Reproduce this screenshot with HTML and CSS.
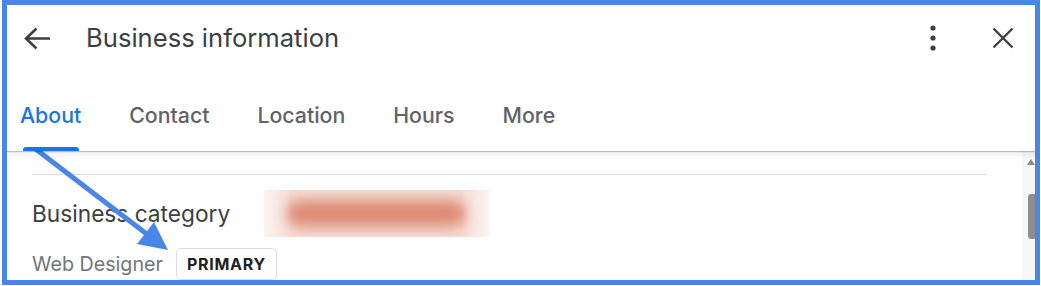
FILE: index.html
```html
<!DOCTYPE html>
<html lang="en">
<head>
<meta charset="utf-8">
<title>Business information</title>
<link rel="stylesheet" href="styles.css">
</head>
<body>
<div class="frame">
  <div class="topbar">
    <div class="header">
      <svg class="back" width="27" height="23" viewBox="0 0 27 23"><path d="M2 11.5H26M12.5 1.5L2 11.5L12.5 21.5" fill="none" stroke="#3c4043" stroke-width="2.6" stroke-linejoin="miter"/></svg>
      <div class="title">Business information</div>
      <div class="actions">
        <svg class="kebab" width="8" height="26" viewBox="0 0 8 26"><circle cx="4" cy="3" r="2.6" fill="#3c4043"/><circle cx="4" cy="13" r="2.6" fill="#3c4043"/><circle cx="4" cy="23" r="2.6" fill="#3c4043"/></svg>
        <svg class="close" width="22" height="22" viewBox="0 0 22 22"><path d="M1.5 1.5L20.5 20.5M20.5 1.5L1.5 20.5" stroke="#3c4043" stroke-width="2.4"/></svg>
      </div>
    </div>
    <div class="tabs">
      <div class="tab active">About</div>
      <div class="tab">Contact</div>
      <div class="tab">Location</div>
      <div class="tab">Hours</div>
      <div class="tab">More</div>
    </div>
  </div>
  <div class="body">
    <div class="content">
      <div class="divider"></div>
      <div class="row">
        <div class="label">Business category</div>
        <div class="redact"><div class="redact-inner"></div></div>
      </div>
      <div class="row2">
        <div class="sub">Web Designer</div>
        <div class="chip">PRIMARY</div>
      </div>
    </div>
    <div class="scrollbar">
      <div class="sb-arrow"></div>
      <div class="sb-thumb"></div>
    </div>
  </div>
</div>
<svg class="annot" width="1041" height="286" viewBox="0 0 1041 286">
  <line x1="33" y1="147" x2="148" y2="235" stroke="#4a86e8" stroke-width="5"/>
  <polygon points="168,250 137,244 154,222" fill="#4a86e8"/>
</svg>
</body>
</html>
```
FILE: styles.css
```css
html, body {
  margin: 0;
  padding: 0;
  background: #fff;
}
body {
  width: 1041px;
  height: 286px;
  position: relative;
  overflow: hidden;
  font-family: Inter, Roboto, Arial, sans-serif;
}
.frame {
  margin-left: 2px;
  width: 1038px;
  height: 285px;
  box-sizing: border-box;
  border: 5px solid #4a86e8;
  display: flex;
  flex-direction: column;
  overflow: hidden;
  background: #fff;
}
.topbar {
  position: relative;
  z-index: 2;
  background: #fff;
  box-shadow: 0 1px 1px rgba(0,0,0,0.22), 0 3px 8px rgba(0,0,0,0.08);
  flex: none;
}
.header {
  height: 66px;
  display: flex;
  align-items: center;
  padding-left: 17px;
}
.back {
  flex: none;
  display: block;
}
.title {
  margin-left: 35px;
  margin-bottom: 2px;
  font-size: 25.6px;
  color: #3c4043;
}
.actions {
  margin-left: auto;
  display: flex;
  align-items: center;
  padding-right: 21px;
}
.kebab {
  display: block;
  margin-right: 55px;
}
.close {
  display: block;
}
.tabs {
  height: 80px;
  display: flex;
  align-items: stretch;
  padding-left: 13px;
  gap: 48px;
}
.tab {
  font-size: 21.3px;
  font-weight: 500;
  color: #5f6368;
  display: flex;
  align-items: center;
  padding-top: 8px;
  position: relative;
}
.tab.active {
  color: #1a73e8;
}
.tab.active::after {
  content: "";
  position: absolute;
  left: 3px;
  right: 2px;
  bottom: 0;
  height: 4px;
  background: #1a73e8;
  border-radius: 3px 3px 0 0;
}
.body {
  flex: 1;
  display: flex;
  min-height: 0;
}
.content {
  flex: 1;
  padding: 23px 35px 0 25px;
}
.divider {
  height: 1px;
  background: #dadce0;
}
.row {
  margin-top: 14px;
  display: flex;
  align-items: center;
  height: 48px;
}
.label {
  font-size: 22.7px;
  color: #3c4043;
  width: 232px;
}
.redact {
  width: 225px;
  height: 47px;
  background: #f5ddd6;
  position: relative;
  overflow: hidden;
  -webkit-mask-image: linear-gradient(90deg, rgba(0,0,0,0.35), #000 12%, #000 88%, rgba(0,0,0,0.35));
  mask-image: linear-gradient(90deg, rgba(0,0,0,0.35), #000 12%, #000 88%, rgba(0,0,0,0.35));
}
.redact-inner {
  position: absolute;
  left: 22px;
  right: 22px;
  top: 10px;
  bottom: 10px;
  border-radius: 14px;
  background: #de8b74;
  filter: blur(7px);
}
.row2 {
  margin-top: 11px;
  display: flex;
  align-items: center;
}
.sub {
  font-size: 19.7px;
  color: #70757a;
}
.chip {
  margin-left: 13px;
  border: 1px solid #dadce0;
  border-radius: 5px;
  padding: 5px 10px 5px 10px;
  font-size: 16px;
  font-weight: 700;
  color: #202124;
  letter-spacing: 0.7px;
}
.scrollbar {
  width: 13px;
  flex: none;
  background: #f6f6f6;
  position: relative;
}
.sb-arrow {
  margin: 8px 0 0 5px;
  width: 0;
  height: 0;
  border-left: 4px solid transparent;
  border-right: 4px solid transparent;
  border-bottom: 6px solid #8a8a8a;
}
.sb-thumb {
  margin: 29px 0 0 6px;
  width: 8px;
  height: 45px;
  background: #8e8e8e;
  border-radius: 3px 0 0 3px;
}
.annot {
  position: absolute;
  left: 0;
  top: 0;
  pointer-events: none;
}
```
